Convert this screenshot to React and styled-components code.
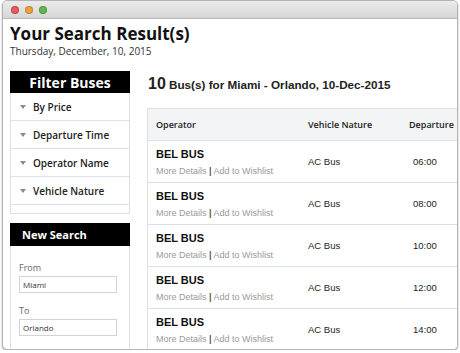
import React from 'react'
import styled, { createGlobalStyle } from 'styled-components'

const GlobalStyle = createGlobalStyle`
  html, body {
    margin: 0;
    padding: 0;
    background: #fff;
  }
  body {
    font-family: "Open Sans", "Liberation Sans", Arial, sans-serif;
    color: #222;
  }
`

const Window = styled.div`
  margin: 0 2px 0 2px;
  width: 454px;
  height: 348px;
  border: 1px solid #b4b4b4;
  border-radius: 5px;
  box-shadow: 0 1px 2px rgba(0, 0, 0, 0.35);
  overflow: hidden;
  display: flex;
  flex-direction: column;
  background: #fff;
`

const TitleBar = styled.div`
  height: 17px;
  flex-shrink: 0;
  background: linear-gradient(to bottom, #ebebeb, #d6d6d6);
  border-bottom: 1px solid #b9b9b9;
  display: flex;
  align-items: center;
  gap: 6px;
  padding-left: 8px;
`

const Dot = styled.span`
  width: 8px;
  height: 8px;
  border-radius: 50%;
  background: ${p => p.color};
  box-shadow: inset 0 0 0 1px rgba(0, 0, 0, 0.18);
`

const Page = styled.div`
  flex: 1;
  padding: 4px 0 0 7px;
  overflow: hidden;
`

const PageTitle = styled.h1`
  margin: 0;
  font-size: 17px;
  font-weight: 700;
  line-height: 22px;
  color: #111;
`

const PageDate = styled.div`
  font-size: 10px;
  line-height: 13px;
  color: #333;
`

const Body = styled.div`
  display: flex;
  gap: 17px;
  margin-top: 13px;
`

const Sidebar = styled.div`
  width: 120px;
  flex-shrink: 0;
  display: flex;
  flex-direction: column;
  gap: 9px;
`

const Panel = styled.div`
  border: 1px solid #d9e0e8;
  border-top: none;
  padding-bottom: ${p => p.pad || 0}px;
  min-height: ${p => p.minH || 0}px;
`

const PanelHead = styled.div`
  background: #000;
  color: #fff;
  font-weight: 700;
  font-size: ${p => p.size || 14}px;
  height: ${p => p.h || 22}px;
  display: flex;
  align-items: center;
  justify-content: ${p => (p.left ? 'flex-start' : 'center')};
  padding-left: ${p => (p.left ? 12 : 0)}px;
  margin: 0 -1px;
`

const FilterItem = styled.div`
  height: 27px;
  border-bottom: 1px solid #dde3ea;
  display: flex;
  align-items: center;
  padding-left: 9px;
  gap: 7px;
  font-size: 10px;
  font-weight: 600;
  color: #222;
`

const Caret = styled.span`
  width: 0;
  height: 0;
  border-left: 3px solid transparent;
  border-right: 3px solid transparent;
  border-top: 4px solid #8a8a8a;
`

const SearchForm = styled.div`
  padding: 16px 12px 0 8px;
  display: flex;
  flex-direction: column;
`

const FieldLabel = styled.label`
  font-size: 9px;
  color: #666;
  line-height: 12px;
  margin-bottom: 2px;
`

const Field = styled.div`
  height: 15px;
  border: 1px solid #d3d3d3;
  font-size: 8px;
  color: #333;
  display: flex;
  align-items: center;
  padding-left: 3px;
  margin-bottom: 12px;
`

const Main = styled.div`
  flex: 1;
  min-width: 0;
`

const ResultsTitle = styled.h2`
  margin: 5px 0 0 1px;
  font-family: "Liberation Sans", Arial, sans-serif;
  font-size: 11.7px;
  font-weight: 700;
  line-height: 16px;
  color: #222;
`

const Count = styled.span`
  font-size: 16px;
`

const Table = styled.div`
  margin-top: 15px;
  border-left: 1px solid #d9e0e8;
  border-top: 1px solid #d9e0e8;
  width: 340px;
`

const Row = styled.div`
  display: grid;
  grid-template-columns: 152px 101px 1fr;
  align-items: center;
  height: ${p => (p.head ? 31 : 41)}px;
  background: ${p => (p.head ? '#f3f4f6' : '#fff')};
  border-bottom: 1px solid #d9e0e8;
`

const HeadCell = styled.div`
  padding-left: ${p => p.pl || 8}px;
  font-size: 9px;
  font-weight: 600;
  color: #222;
  white-space: nowrap;
`

const Cell = styled.div`
  padding-left: ${p => p.pl || 8}px;
  font-family: "Liberation Sans", Arial, sans-serif;
  font-size: 9.5px;
  color: #222;
  white-space: nowrap;
`

const Operator = styled.div`
  font-family: "Liberation Sans", Arial, sans-serif;
  font-weight: 700;
  font-size: 11px;
  color: #111;
  line-height: 14px;
`

const Links = styled.div`
  font-family: "Liberation Sans", Arial, sans-serif;
  font-size: 9px;
  color: #9a9a9a;
  line-height: 12px;
  margin-top: 4px;

  b {
    color: #555;
  }
`

const filters = ['By Price', 'Departure Time', 'Operator Name', 'Vehicle Nature']
const times = ['06:00', '08:00', '10:00', '12:00', '14:00']

export default function App() {
  return (
    <>
      <GlobalStyle />
      <Window>
        <TitleBar>
          <Dot color="#e85b5b" />
          <Dot color="#e7a23a" />
          <Dot color="#62b749" />
        </TitleBar>
        <Page>
          <PageTitle>Your Search Result(s)</PageTitle>
          <PageDate>Thursday, December, 10, 2015</PageDate>
          <Body>
            <Sidebar>
              <Panel pad={8}>
                <PanelHead>Filter Buses</PanelHead>
                {filters.map(f => (
                  <FilterItem key={f}>
                    <Caret />
                    {f}
                  </FilterItem>
                ))}
              </Panel>
              <Panel minH={130}>
                <PanelHead left size={11} h={23}>New Search</PanelHead>
                <SearchForm>
                  <FieldLabel>From</FieldLabel>
                  <Field>Miami</Field>
                  <FieldLabel>To</FieldLabel>
                  <Field>Orlando</Field>
                </SearchForm>
              </Panel>
            </Sidebar>
            <Main>
              <ResultsTitle>
                <Count>10</Count> Bus(s) for Miami - Orlando, 10-Dec-2015
              </ResultsTitle>
              <Table>
                <Row head>
                  <HeadCell>Operator</HeadCell>
                  <HeadCell>Vehicle Nature</HeadCell>
                  <HeadCell>Departure</HeadCell>
                </Row>
                {times.map(t => (
                  <Row key={t}>
                    <Cell>
                      <Operator>BEL BUS</Operator>
                      <Links>
                        More Details <b>|</b> Add to Wishlist
                      </Links>
                    </Cell>
                    <Cell>AC Bus</Cell>
                    <Cell pl={12}>{t}</Cell>
                  </Row>
                ))}
              </Table>
            </Main>
          </Body>
        </Page>
      </Window>
    </>
  )
}
